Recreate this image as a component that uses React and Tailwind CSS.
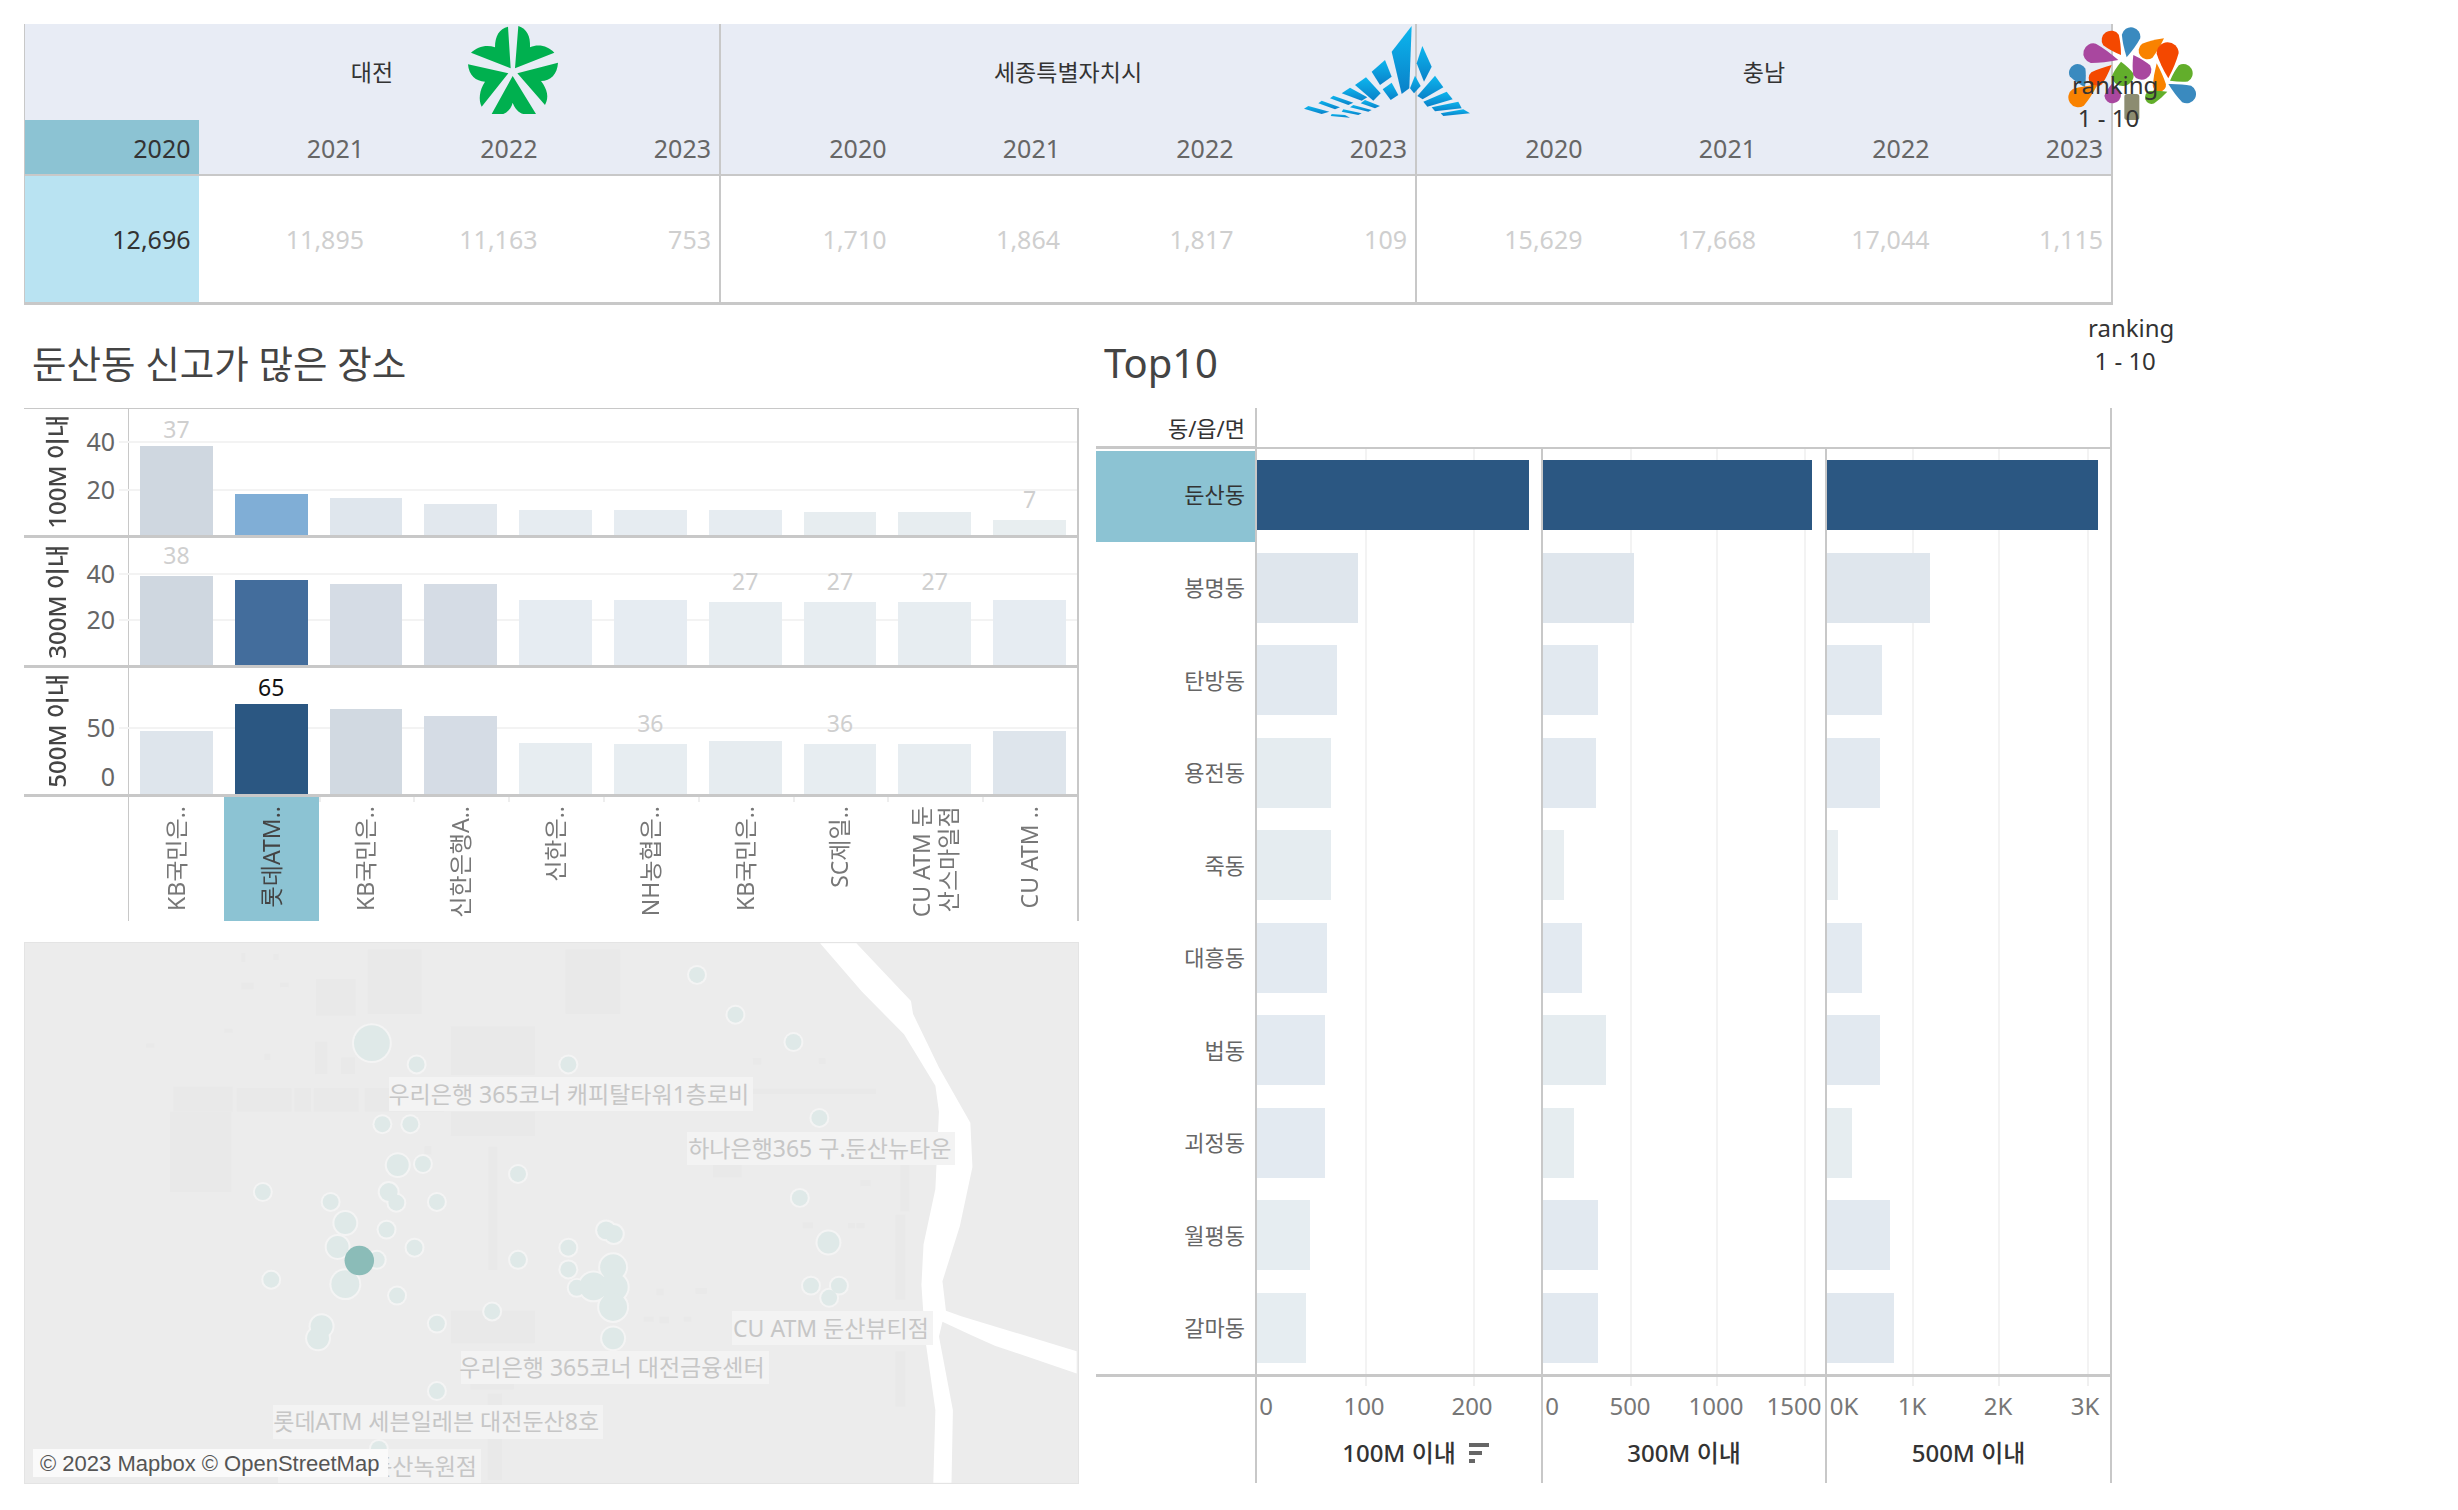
import React from 'react'

const years = ['2020', '2021', '2022', '2023']
const regions = [
  { name: '대전', values: ['12,696', '11,895', '11,163', '753'], selected: true },
  { name: '세종특별자치시', values: ['1,710', '1,864', '1,817', '109'] },
  { name: '충남', values: ['15,629', '17,668', '17,044', '1,115'] },
]

const placeLabels = ['KB국민은..', '롯데ATM..', 'KB국민은..', '신한은행A..', '신한은..', 'NH농협은..', 'KB국민은..', 'SC제일..', 'CU ATM 둔\n산스마일점', 'CU ATM ..']

const placeRows = [
  {
    title: '100M 이내', height: 'h-[129px]', grid: [[32, '40'], [80, '20']],
    bars: [
      [89, '#cfd7e0', '37'], [41, '#80aed6'], [37, '#dfe6ed'], [31, '#e2e8ee'], [25, '#e6ecf1'],
      [25, '#e6ecf1'], [25, '#e6ecf1'], [23, '#e7edf0'], [23, '#e7edf0'], [15, '#e8eef0', '7'],
    ],
  },
  {
    title: '300M 이내', height: 'h-[130px]', grid: [[35, '40'], [81, '20']],
    bars: [
      [89, '#cfd7e0', '38'], [85, '#436d9c'], [81, '#d5dce5'], [81, '#d5dce5'], [65, '#e6ecf2'],
      [65, '#e6ecf2'], [63, '#e7edf1', '27'], [63, '#e7edf1', '27'], [63, '#e7edf1', '27'], [65, '#e6ecf2'],
    ],
  },
  {
    title: '500M 이내', height: 'h-[129px]', grid: [[59, '50'], [108, '0', true]],
    bars: [
      [63, '#dee5ec'], [90, '#2b5782', '65', true], [85, '#d1d9e1'], [78, '#d5dce5'], [51, '#e7edf1'],
      [50, '#e7edf1', '36'], [53, '#e6ecf0'], [50, '#e7edf1', '36'], [50, '#e7edf1'], [63, '#dee5ec'],
    ],
  },
]

const towns = [
  { name: '둔산동', bars: [[272, '#2b5782'], [269, '#2b5782'], [271, '#2b5782']], selected: true },
  { name: '봉명동', bars: [[101, '#dfe6ed'], [91, '#dfe6ed'], [103, '#dfe6ed']] },
  { name: '탄방동', bars: [[80, '#e2e9f0'], [55, '#e2e9f0'], [55, '#e2e9f0']] },
  { name: '용전동', bars: [[74, '#e5ecf0'], [53, '#e2e9f0'], [53, '#e2e9f0']] },
  { name: '죽동', bars: [[74, '#e5ecf0'], [21, '#e8eef1'], [11, '#e8eef1']] },
  { name: '대흥동', bars: [[70, '#e3eaf1'], [39, '#e3eaf1'], [35, '#e3eaf1']] },
  { name: '법동', bars: [[68, '#e3eaf1'], [63, '#e5ecf0'], [53, '#e2e9f0']] },
  { name: '괴정동', bars: [[68, '#e3eaf1'], [31, '#e6edf0'], [25, '#e6edf0']] },
  { name: '월평동', bars: [[53, '#e6edf1'], [55, '#e2e9f0'], [63, '#e2e9f0']] },
  { name: '갈마동', bars: [[49, '#e6edf1'], [55, '#e2e9f0'], [67, '#e1e8ef']] },
]

const panes = [
  { width: 'w-[286px]', title: '100M 이내', grid: [108, 216], ticks: [[9, '0'], [107, '100'], [215, '200']], sort: true },
  { width: 'w-[284px]', title: '300M 이내', grid: [87, 173, 261], ticks: [[9, '0'], [87, '500'], [173, '1000'], [251, '1500']] },
  { width: 'w-[287px]', title: '500M 이내', grid: [85, 171, 260], ticks: [[17, '0K'], [85, '1K'], [171, '2K'], [258, '3K']] },
]

// map pieces are read off the zoomed reference: x / 1.425, y / 2.703
const mx = x => x / 1.425 - 24
const my = y => y / 2.703 - 12

const dots = [
  [994, 119, 8], [1049, 227, 8], [1132, 301, 8], [529, 304, 18], [593, 362, 8], [810, 362, 8], [544, 524, 8], [584, 524, 8],
  [1169, 507, 8], [566, 635, 11], [602, 632, 8], [738, 659, 8], [373, 708, 8], [553, 708, 9], [564, 737, 8], [622, 735, 8],
  [470, 735, 8], [1141, 724, 8], [491, 792, 11], [550, 810, 8], [864, 812, 9], [875, 822, 9], [480, 857, 11], [590, 859, 8],
  [1182, 845, 11], [810, 859, 8], [536, 892, 8], [738, 892, 8], [810, 918, 8], [874, 912, 13], [385, 946, 8], [822, 968, 8],
  [846, 964, 14], [875, 966, 14], [491, 958, 14], [874, 1020, 14], [1157, 962, 8], [1197, 962, 8], [1183, 995, 8], [565, 989, 8],
  [622, 1065, 8], [701, 1032, 8], [457, 1072, 11], [452, 1105, 11], [874, 1105, 11], [622, 1248, 8], [539, 1405, 8],
]

const blocks = [
  [523, 50, 600, 225], [806, 50, 884, 225], [449, 130, 506, 230], [642, 258, 762, 390], [642, 490, 762, 556], [245, 422, 330, 490],
  [240, 490, 328, 708], [336, 426, 414, 490], [418, 426, 442, 490], [446, 426, 510, 490], [519, 426, 632, 490], [642, 1030, 762, 1118],
  [448, 300, 465, 388], [485, 343, 505, 388], [696, 585, 708, 920], [1017, 632, 1058, 668], [1072, 428, 1250, 442], [670, 1228, 732, 1244],
  [604, 584, 614, 606], [1278, 770, 1292, 1000], [1278, 1140, 1292, 1290], [1285, 630, 1298, 760],
  [918, 1046, 932, 1060], [940, 1046, 954, 1064], [975, 1046, 986, 1060], [936, 970, 946, 988], [992, 968, 1008, 984],
  [1145, 790, 1160, 806], [1210, 792, 1220, 806], [1222, 792, 1234, 806], [1228, 675, 1242, 692], [1074, 345, 1086, 362],
  [1168, 345, 1178, 360], [342, 60, 348, 84], [388, 62, 396, 78], [342, 140, 360, 158], [398, 140, 410, 152],
  [318, 265, 330, 276], [206, 305, 218, 316], [375, 333, 384, 350], [695, 1255, 715, 1490],
]

const mapLabels = [
  ['우리은행 365코너 캐피탈타워1층로비', 553, 395, 1072, 487],
  ['하나은행365 구.둔산뉴타운', 978, 543, 1360, 632],
  ['CU ATM 둔산뷰티점', 1041, 1028, 1328, 1118],
  ['우리은행 365코너 대전금융센터', 656, 1135, 1094, 1225],
  ['롯데ATM 세븐일레븐 대전둔산8호', 388, 1281, 858, 1372],
  ['둔산녹원점', 395, 1400, 684, 1492],
]

const river = 'M1170 33 L1222 33 L1300 190 L1303 225 L1340 370 L1385 520 L1388 640 L1370 800 L1345 950 L1350 1030 L1372 1045 L1537 1140 L1537 1200 L1420 1125 L1385 1095 L1345 1060 L1340 1100 L1360 1300 L1358 1497 L1332 1497 L1335 1300 L1320 1100 L1315 960 L1318 850 L1335 700 L1340 490 L1335 420 L1290 280 L1230 165 Z'

const riverPath = river.replace(/(\d+) (\d+)/g, (_, x, y) => `${mx(+x).toFixed(1)} ${my(+y).toFixed(1)}`)

function StarLogo() {
  return (
    <svg viewBox="0 0 480 390" className="absolute left-[440px] top-0 w-[160px] h-[130px] blur-[0.4px]">
      <g fill="#00b04f">
        <path d="M212 205 L204 80 C178 86 165 108 165 142 C140 132 112 140 93 158 Z" />
        <path d="M225 205 L235 78 C260 86 272 108 270 142 C295 130 325 138 343 158 Z" />
        <path d="M205 220 L84 193 C86 225 108 245 135 245 C118 270 115 300 125 320 Z" />
        <path d="M232 220 L354 188 C352 222 332 243 303 243 C322 268 328 292 315 315 Z" />
        <path d="M218 228 L155 342 L190 342 C205 335 215 322 218 308 C224 325 236 338 250 342 L288 342 Z" />
      </g>
    </svg>
  )
}

function SejongLogo() {
  const blades = [
    '365,48 305,125 335,252 358,235', '285,150 245,185 270,225 305,200', '305,218 278,238 302,270 325,255',
    '228,202 195,225 250,272 272,250', '180,233 155,250 215,272 232,262', '130,257 120,265 175,285 190,278',
    '95,272 85,280 135,298 150,292', '55,288 42,296 95,312 118,305', '225,270 212,280 255,295 270,288',
    '190,285 180,292 235,305 245,300', '160,298 155,305 205,315 215,310', '125,312 122,318 180,323 165,315',
    '397,108 380,160 402,215 425,170', '375,197 360,235 372,250 392,228', '435,197 382,258 398,268 460,232',
    '470,245 400,275 412,290 488,268', '505,275 425,292 435,304 515,295', '520,298 452,310 460,318 540,310',
  ]
  return (
    <svg viewBox="0 0 600 360" className="absolute left-[1290px] top-[10px] w-[200px] h-[120px] blur-[0.4px]">
      <defs>
        <linearGradient id="sejong" x1="0" y1="0" x2="0" y2="1">
          <stop offset="0" stopColor="#0cb6ee" />
          <stop offset="1" stopColor="#0a80c8" />
        </linearGradient>
      </defs>
      {blades.map(p => <polygon key={p} points={p} fill="url(#sejong)" />)}
    </svg>
  )
}

function drop(tx, ty, cx, cy, r) {
  const len = Math.hypot(cx - tx, cy - ty)
  const nx = -(cy - ty) / len
  const ny = (cx - tx) / len
  const a = `${cx + nx * r} ${cy + ny * r}`
  const b = `${cx - nx * r} ${cy - ny * r}`
  const qx = tx + (cx - tx) * 0.55
  const qy = ty + (cy - ty) * 0.55
  return `M${tx} ${ty} Q${qx + nx * r * 0.7} ${qy + ny * r * 0.7} ${a} A${r} ${r} 0 1 0 ${b} Q${qx - nx * r * 0.7} ${qy - ny * r * 0.7} ${tx} ${ty} Z`
}

function TreeLogo() {
  const orange = '#f98200', red = '#f44800', blue = '#3a8abf', purple = '#a9479f', green = '#62ae2b'
  const drops = [
    [243, 135, 213, 90, 28, red], [260, 142, 273, 80, 28, blue], [372, 85, 322, 122, 26, orange], [385, 205, 383, 130, 33, red],
    [235, 150, 160, 130, 30, purple], [390, 212, 430, 190, 28, green], [385, 222, 440, 252, 28, blue], [135, 232, 113, 188, 26, blue],
    [215, 165, 170, 205, 24, red], [243, 155, 248, 195, 33, green], [280, 135, 305, 180, 29, purple], [350, 160, 358, 225, 20, orange],
    [215, 222, 218, 255, 25, purple], [172, 225, 115, 262, 30, orange], [382, 245, 335, 262, 20, green],
  ]
  return (
    <svg viewBox="0 0 600 390" className="absolute left-[2040px] top-[10px] w-[200px] h-[130px] blur-[0.4px]">
      {drops.map(d => <path key={d.join()} d={drop(d[0], d[1], d[2], d[3], d[4])} fill={d[5]} />)}
      <rect x="253" y="252" width="45" height="78" rx="8" fill="#8c8c70" />
    </svg>
  )
}

function Summary() {
  return (
    <div className="w-[2089px] h-[281px] flex border-l border-b-[3px] border-[#c8c8c8]">
      {regions.map(r => (
        <div key={r.name} className="w-[696px] flex flex-col border-r-2 border-[#c8c8c8]">
          <div className="h-[96px] bg-[#e8ecf5] flex items-center justify-center text-[23px] text-[#333]">{r.name}</div>
          <div className="h-[56px] bg-[#e8ecf5] grid grid-cols-4 border-b-2 border-[#c8c8c8]">
            {years.map((y, i) => (
              <div key={y} className={`flex items-center justify-end pr-[8px] pt-[4px] text-[25px] ${r.selected && i === 0 ? 'bg-[#8cc3d3] text-[#333]' : 'text-[#666]'}`}>{y}</div>
            ))}
          </div>
          <div className="flex-1 grid grid-cols-4">
            {r.values.map((v, i) => (
              <div key={v} className={`flex items-center justify-end pr-[8px] pt-[2px] text-[25px] ${r.selected && i === 0 ? 'bg-[#b9e3f2] text-[#333]' : 'text-[#cfcfcf]'}`}>{v}</div>
            ))}
          </div>
        </div>
      ))}
    </div>
  )
}

function PlaceRow({ row }) {
  return (
    <div className={`${row.height} flex border-b-[3px] border-[#c8c8c8]`}>
      <div className="w-[104px] flex items-center pl-[19px]">
        <span className="[writing-mode:vertical-rl] [text-orientation:sideways] rotate-180 text-[24px] leading-[28px] font-medium text-[#444] whitespace-nowrap">{row.title}</span>
      </div>
      <div className="relative flex-1 flex items-end border-l border-r-2 border-[#c8c8c8]">
        {row.grid.map(([top, label, noLine]) => (
          <div key={label} className="absolute left-[-10px] right-0" style={{ top }}>
            {!noLine && <div className="h-[2px] bg-[#f3f3f3]" />}
            <span className="absolute right-full top-[-17px] mr-[4px] text-[25px] leading-[34px] text-[#666]">{label}</span>
          </div>
        ))}
        {row.bars.map(([h, color, value, strong], i) => (
          <div key={i} className="relative flex-1 flex flex-col items-center justify-end px-[11px]">
            {value && <span className={`text-[23px] leading-[34px] ${strong ? 'text-[#111]' : 'text-[#cfcfcf]'} ${strong || value === '37' ? '' : 'mb-[4px]'}`}>{value}</span>}
            <div className="w-full" style={{ height: h, background: color }} />
          </div>
        ))}
      </div>
    </div>
  )
}

function PlaceChart() {
  return (
    <div className="w-[1055px] h-[513px] flex flex-col border-t border-[#c8c8c8]">
      {placeRows.map(r => <PlaceRow key={r.title} row={r} />)}
      <div className="flex-1 flex pl-[104px]">
        <div className="flex-1 flex border-l border-r-2 border-[#c8c8c8]">
          {placeLabels.map((l, i) => (
            <div key={i} className={`relative flex-1 flex justify-center items-start pt-[9px] ${i === 1 ? 'bg-[#8cc3d3] text-[#444]' : 'text-[#777]'}`}>
              {i > 1 && <span className="absolute left-0 top-0 w-[2px] h-[5px] bg-[#eeeeee]" />}
              <span className="[writing-mode:vertical-rl] [text-orientation:sideways] rotate-180 text-[23px] leading-[27px] text-end whitespace-pre-line">{l}</span>
            </div>
          ))}
        </div>
      </div>
    </div>
  )
}

function MapPanel() {
  return (
    <div className="relative w-[1055px] h-[542px] mt-[21px] bg-[#ececec] border border-[#e4e4e4] overflow-hidden">
      <svg viewBox="0 0 1055 542" className="absolute inset-0 w-full h-full">
        {blocks.map(b => (
          <rect key={b.join()} x={mx(b[0])} y={my(b[1])} width={(b[2] - b[0]) / 1.425} height={(b[3] - b[1]) / 2.703} fill="#e9e9e9" />
        ))}
        <path d={riverPath} fill="#ffffff" />
        {dots.map(d => (
          <circle key={d.join()} cx={mx(d[0])} cy={my(d[1])} r={d[2] + 2} fill="#f4f4f4" />
        ))}
        {dots.map(d => (
          <circle key={d.join()} cx={mx(d[0])} cy={my(d[1])} r={d[2]} fill="#dfe9e8" />
        ))}
        <circle cx={mx(511)} cy={my(894)} r="14.8" fill="#8bbcb8" />
      </svg>
      {mapLabels.map(([text, x1, y1, x2, y2]) => (
        <div
          key={text}
          className="absolute flex items-center justify-end pr-[4px] bg-[#f3f3f3] text-[23px] text-[#c6c6c6] whitespace-nowrap"
          style={{ left: mx(x1), top: my(y1), width: (x2 - x1) / 1.425, height: (y2 - y1) / 2.703 }}
        >
          {text}
        </div>
      ))}
      <div className="absolute left-[8px] bottom-[6px] h-[28px] w-[355px] pl-[7px] bg-[#fafafa] flex items-center text-[22px] text-[#555] font-['Liberation_Sans',sans-serif] whitespace-nowrap">
        © 2023 Mapbox © OpenStreetMap
      </div>
    </div>
  )
}

function TownChart() {
  return (
    <div className="w-[1016px] flex flex-col">
      <div className="h-[41px] flex">
        <div className="w-[159px] flex items-center justify-end pr-[10px] pt-[3px] text-[22px] text-[#333] border-b-[3px] border-[#c8c8c8]">동/읍/면</div>
        <div className="w-[857px] border-l-2 border-r-2 border-b-2 border-[#c8c8c8]" />
      </div>
      <div className="h-[928px] flex border-b-[3px] border-[#c8c8c8]">
        <div className="w-[159px] flex flex-col">
          {towns.map(t => (
            <div key={t.name} className={`h-[92.5px] flex items-center justify-end pr-[10px] text-[22px] ${t.selected ? 'bg-[#8cc3d3] text-[#333] border-t-2 border-white pb-[3px]' : 'text-[#666]'}`}>{t.name}</div>
          ))}
        </div>
        {panes.map((p, pi) => (
          <div key={p.title} className={`relative ${p.width} flex flex-col border-l-2 border-[#c8c8c8] last:border-r-2`}>
            {p.grid.map(x => <span key={x} className="absolute top-0 bottom-0 w-[2px] bg-[#f3f3f3]" style={{ left: x }} />)}
            {towns.map(t => (
              <div key={t.name} className="relative h-[92.5px] flex items-center">
                <div className="h-[70px]" style={{ width: t.bars[pi][0], background: t.bars[pi][1] }} />
              </div>
            ))}
          </div>
        ))}
      </div>
      <div className="h-[106px] flex pl-[159px]">
        {panes.map(p => (
          <div key={p.title} className={`relative ${p.width} flex flex-col border-l-2 border-[#c8c8c8] last:border-r-2`}>
            {p.grid.map(x => <span key={x} className="absolute top-0 h-[9px] w-[2px] bg-[#f0f0f0]" style={{ left: x }} />)}
            <div className="relative h-[59px]">
              {p.ticks.map(([x, label]) => (
                <span key={label} className="absolute top-[12px] -translate-x-1/2 text-[24px] leading-[34px] text-[#777]" style={{ left: x }}>{label}</span>
              ))}
            </div>
            <div className="flex justify-center text-[24px] font-medium text-[#333] leading-[34px]">
              <span className="relative">
                {p.title}
                {p.sort && (
                  <svg width="20" height="20" viewBox="0 0 20 20" fill="#666" className="absolute left-full top-[7px] ml-[13px]">
                    <rect x="0" y="0" width="20" height="4" />
                    <rect x="0" y="8" width="13" height="4" />
                    <rect x="0" y="16" width="6" height="4" />
                  </svg>
                )}
              </span>
            </div>
          </div>
        ))}
      </div>
    </div>
  )
}

export default function App() {
  return (
    <div className="relative w-[2458px] h-[1510px] bg-white pt-[24px] pl-[24px] font-['Noto_Sans','Noto_Sans_CJK_KR',sans-serif]">
      <Summary />
      <StarLogo />
      <SejongLogo />
      <TreeLogo />
      {/* ranking filter sits on top of the logo in the dashboard */}
      <div className="absolute left-[2072px] top-[68px] text-[24px] leading-[33px] text-[#333] text-center w-[85px]">
        <div>ranking</div>
        <div className="pr-[12px]">1 - 10</div>
      </div>

      <div className="h-[103px] flex items-start">
        <h2 className="w-[1080px] pl-[8px] pt-[34px] text-[37.5px] leading-[50px] text-[#444]">둔산동 신고가 많은 장소</h2>
        <h2 className="w-[984px] pt-[33px] text-[40px] leading-[50px] text-[#444]">Top10</h2>
        <div className="pt-[6px] text-[24px] leading-[33px] text-[#333] text-center">
          <div>ranking</div>
          <div className="pr-[12px]">1 - 10</div>
        </div>
      </div>

      <div className="flex gap-[17px]">
        <div className="flex flex-col">
          <PlaceChart />
          <MapPanel />
        </div>
        <TownChart />
      </div>
    </div>
  )
}
